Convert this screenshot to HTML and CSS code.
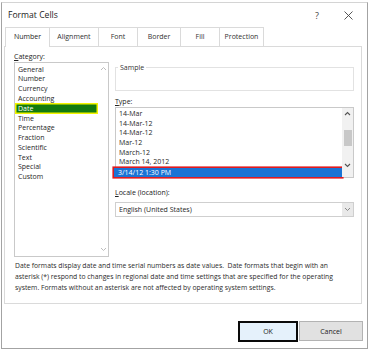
FILE: index.html
```html
<!DOCTYPE html>
<html lang="en">
<head>
    <meta charset="UTF-8">
    <title>Format Cells</title>
    <link rel="stylesheet" href="styles.css">
</head>
<body>

<div class="dialog">
    <div class="titlebar">
        <span class="title">Format Cells</span>
        <span class="help">?</span>
        <svg class="close" width="9" height="9" viewBox="0 0 9 9">
            <path d="M0.5 0.5 L8.5 8.5 M8.5 0.5 L0.5 8.5" stroke="#444" stroke-width="0.9" fill="none"/>
        </svg>
    </div>

    <div class="tabs">
        <div class="tab tab-active w45">Number</div>
        <div class="tab w50">Alignment</div>
        <div class="tab w40">Font</div>
        <div class="tab w44">Border</div>
        <div class="tab w40">Fill</div>
        <div class="tab w45">Protection</div>
    </div>

    <div class="panel">
        <div class="columns">
            <div class="col-left">
                <div class="label"><u>C</u>ategory:</div>
                <div class="listbox cat-list">
                    <div class="items cat-items">
                        <div class="item">General</div>
                        <div class="item">Number</div>
                        <div class="item">Currency</div>
                        <div class="item">Accounting</div>
                        <div class="item item-date">Date</div>
                        <div class="item">Time</div>
                        <div class="item">Percentage</div>
                        <div class="item">Fraction</div>
                        <div class="item">Scientific</div>
                        <div class="item">Text</div>
                        <div class="item">Special</div>
                        <div class="item">Custom</div>
                    </div>
                    <div class="scroll scroll-off">
                        <svg width="7" height="5" viewBox="0 0 7 5"><path d="M1 4 L3.5 1.5 L6 4" stroke="#bdbdbd" stroke-width="1" fill="none"/></svg>
                        <svg width="7" height="5" viewBox="0 0 7 5"><path d="M1 1 L3.5 3.5 L6 1" stroke="#bdbdbd" stroke-width="1" fill="none"/></svg>
                    </div>
                </div>
            </div>

            <div class="col-right">
                <fieldset class="sample">
                    <legend>Sample</legend>
                </fieldset>

                <div class="label label-type"><u>T</u>ype:</div>
                <div class="listbox type-list">
                    <div class="items type-items">
                        <div class="item">14-Mar</div>
                        <div class="item">14-Mar-12</div>
                        <div class="item">14-Mar-12</div>
                        <div class="item">Mar-12</div>
                        <div class="item">March-12</div>
                        <div class="item">March 14, 2012</div>
                        <div class="item item-selected">3/14/12 1:30 PM</div>
                    </div>
                    <div class="scroll scroll-type">
                        <svg width="7" height="5" viewBox="0 0 7 5"><path d="M1 4 L3.5 1.5 L6 4" stroke="#555" stroke-width="1.1" fill="none"/></svg>
                        <div class="thumb"></div>
                        <svg width="7" height="5" viewBox="0 0 7 5"><path d="M1 1 L3.5 3.5 L6 1" stroke="#555" stroke-width="1.1" fill="none"/></svg>
                    </div>
                </div>

                <div class="label label-locale"><u>L</u>ocale (location):</div>
                <div class="dropdown">
                    <span class="dropdown-text">English (United States)</span>
                    <span class="dropdown-btn">
                        <svg width="7" height="5" viewBox="0 0 7 5"><path d="M1 1 L3.5 3.5 L6 1" stroke="#888" stroke-width="1" fill="none"/></svg>
                    </span>
                </div>
            </div>
        </div>

        <p class="description">Date formats display date and time serial numbers as date values.&nbsp; Date formats that begin with an<br>asterisk (*) respond to changes in regional date and time settings that are specified for the operating<br>system. Formats without an asterisk are not affected by operating system settings.</p>
    </div>

    <div class="footer">
        <button class="btn btn-ok">OK</button>
        <button class="btn btn-cancel">Cancel</button>
    </div>
</div>

</body>
</html>
```

FILE: styles.css
```css
body {
    margin: 0;
    width: 369px;
    height: 349px;
    overflow: hidden;
    background: #fff;
    font-family: "Open Sans", sans-serif;
    color: #262626;
}

.dialog {
    box-sizing: border-box;
    width: 367px;
    height: 347px;
    margin: 2px 0 0 1px;
    border: 1px solid #a3a3a3;
    border-top-color: #d4d4d4;
    background: #fff;
    display: flex;
    flex-direction: column;
}

.titlebar {
    height: 24px;
    display: flex;
    align-items: center;
    padding: 0 14px 0 6px;
}

.title {
    flex: 1;
    font-size: 8.6px;
    color: #222;
}

.help {
    font-size: 9px;
    color: #444;
    margin-right: 25px;
}

.tabs {
    display: flex;
    height: 19px;
    padding-left: 4px;
    position: relative;
    z-index: 1;
}

.tab {
    box-sizing: border-box;
    height: 19px;
    border: 1px solid #dadada;
    border-bottom: none;
    margin-left: -1px;
    text-align: center;
    font-size: 7px;
    line-height: 18px;
    color: #333;
    background: #fff;
}

.tab-active {
    height: 20px;
    color: #222;
}

.w40 { width: 40px; }
.w44 { width: 44px; }
.w45 { width: 45px; }
.w50 { width: 50px; }

.panel {
    box-sizing: border-box;
    height: 258px;
    margin: 0 5px 0 2px;
    border: 1px solid #dadada;
    padding: 4px 5px 0 9px;
}

.columns {
    display: grid;
    grid-template-columns: 95px 239px;
    column-gap: 6px;
}

.label {
    font-size: 7px;
    line-height: 11px;
    height: 11px;
    color: #222;
}

.listbox {
    box-sizing: border-box;
    border: 1px solid #c9c9c9;
    display: flex;
    font-size: 7px;
}

.cat-list {
    height: 195px;
}

.items {
    flex: 1;
}

.cat-items {
    padding-top: 1.5px;
}

.item {
    height: 9.8px;
    line-height: 9.8px;
    padding-left: 3px;
    white-space: nowrap;
}

.item-date {
    background: #127a0f;
    color: #fff;
    box-shadow: inset 0 0 0 1.5px #f4f400;
    height: 11px;
    line-height: 11px;
    margin: -0.6px 0;
}

.scroll {
    width: 10px;
    display: flex;
    flex-direction: column;
    align-items: center;
    justify-content: space-between;
    padding: 3px 0 4px;
}

.col-right {
    display: flex;
    flex-direction: column;
}

.sample {
    box-sizing: border-box;
    margin: 11.5px 0 0;
    height: 28.5px;
    padding: 0;
    border: 1px solid #e2e2e2;
}

.sample legend {
    font-size: 7px;
    line-height: 9px;
    padding: 0 2px;
    margin-left: 2px;
    color: #333;
}

.label-type {
    margin-top: 5px;
}

.type-list {
    height: 71px;
}

.type-items {
    padding-top: 1px;
}

.type-items .item {
    height: 9.7px;
    line-height: 9.7px;
}

.item-selected {
    background: #1a73d4;
    color: #fff;
    margin-left: -2px;
    padding-left: 4px;
    box-shadow: 0 0 0 1.6px #e01b1f;
    height: 10.5px;
    line-height: 10.5px;
    margin-top: 0.6px;
}

.scroll-type {
    width: 11px;
    background: #f1f1f1;
    padding: 3px 0 4px;
    justify-content: flex-start;
}

.thumb {
    width: 8px;
    height: 16px;
    background: #c8c8c8;
    margin: 14px 0 17px;
}

.label-locale {
    margin-top: 9px;
}

.dropdown {
    box-sizing: border-box;
    height: 15px;
    margin-top: 4px;
    border: 1px solid #cfcfcf;
    display: flex;
    align-items: center;
    font-size: 7px;
}

.dropdown-text {
    flex: 1;
    padding-left: 3px;
}

.dropdown-btn {
    width: 11px;
    height: 100%;
    background: #e9e9e9;
    display: flex;
    align-items: center;
    justify-content: center;
}

.description {
    margin: 3px 0 0 1px;
    font-size: 6.8px;
    line-height: 11px;
    color: #2b2b2b;
    white-space: nowrap;
}

.footer {
    display: flex;
    justify-content: flex-end;
    align-items: flex-start;
    padding-right: 4px;
    margin-top: 17px;
}

.btn {
    box-sizing: border-box;
    font-family: "Open Sans", sans-serif;
    font-size: 7px;
    color: #222;
    padding: 0;
}

.btn-ok {
    width: 60px;
    height: 21px;
    border: 2px solid #0a0a0a;
    background: #e5f1fb;
    margin-right: 1px;
}

.btn-cancel {
    width: 64px;
    height: 20px;
    border: 1px solid #b3b3b3;
    background: #e1e1e1;
}
```
